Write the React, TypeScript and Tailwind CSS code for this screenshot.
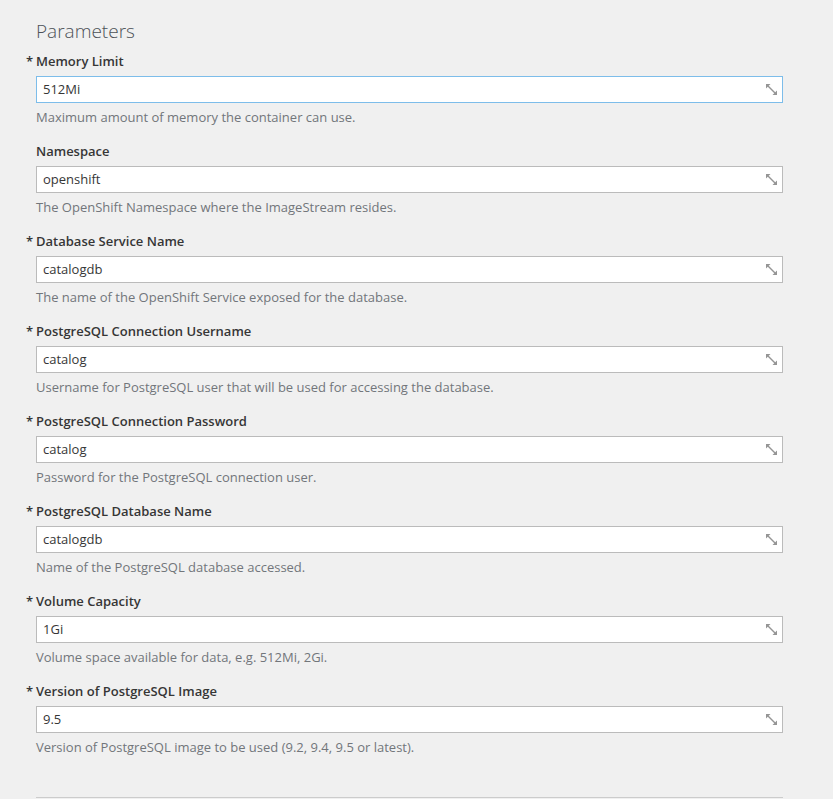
import React from "react";

const fields = [
  { label: "Memory Limit", required: true, value: "512Mi", help: "Maximum amount of memory the container can use.", focus: true },
  { label: "Namespace", required: false, value: "openshift", help: "The OpenShift Namespace where the ImageStream resides." },
  { label: "Database Service Name", required: true, value: "catalogdb", help: "The name of the OpenShift Service exposed for the database." },
  { label: "PostgreSQL Connection Username", required: true, value: "catalog", help: "Username for PostgreSQL user that will be used for accessing the database." },
  { label: "PostgreSQL Connection Password", required: true, value: "catalog", help: "Password for the PostgreSQL connection user." },
  { label: "PostgreSQL Database Name", required: true, value: "catalogdb", help: "Name of the PostgreSQL database accessed." },
  { label: "Volume Capacity", required: true, value: "1Gi", help: "Volume space available for data, e.g. 512Mi, 2Gi." },
  { label: "Version of PostgreSQL Image", required: true, value: "9.5", help: "Version of PostgreSQL image to be used (9.2, 9.4, 9.5 or latest)." },
];

function ExpandIcon() {
  return (
    <svg width="11" height="11" viewBox="0 0 11 11" fill="#959595">
      <polygon points="0,0 4.5,0 0,4.5" />
      <polygon points="11,11 6.5,11 11,6.5" />
      <line x1="2" y1="2" x2="9" y2="9" stroke="#959595" strokeWidth="1.4" />
    </svg>
  );
}

export default function App() {
  return (
    <div
      className="min-h-[799px] w-full bg-[#f0f0f0] pl-[36px] pr-[50px] pt-[19px]"
      style={{ fontFamily: '"Open Sans", "Noto Sans", sans-serif' }}
    >
      <h3 className="h-[24px] text-[19px] font-light leading-[24px] text-[#4d5258] mb-[9px]">Parameters</h3>
      <div className="flex flex-col">
        {fields.map((f) => (
          <div key={f.label} className="flex flex-col mb-[16px]">
            <div className="h-[18px] text-[13px] font-semibold leading-[18px] text-[#363636] mb-[6px] flex">
              {f.required && <span className="-ml-[10px] w-[10px]">*</span>}
              <span>{f.label}</span>
            </div>
            <div
              className={`flex h-[27px] items-center justify-between bg-white border pl-[6px] pr-[5px] ${
                f.focus ? "border-[#7dbdea]" : "border-[#bbbbbb]"
              }`}
            >
              <span className="text-[13px] text-[#363636]">{f.value}</span>
              <ExpandIcon />
            </div>
            <div className="mt-[5px] h-[18px] text-[13px] leading-[18px] text-[#72767b]">{f.help}</div>
          </div>
        ))}
      </div>
      <div className="mt-[25px] border-t border-[#cccccc]" />
    </div>
  );
}
